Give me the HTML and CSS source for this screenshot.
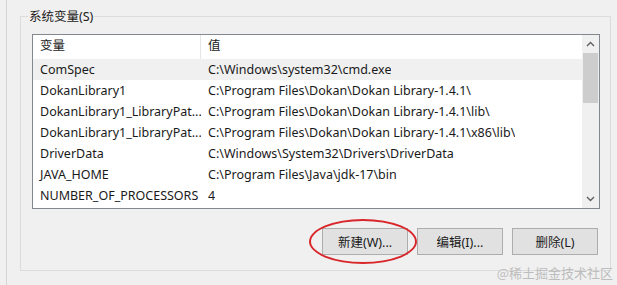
FILE: index.html
```html
<!DOCTYPE html>
<html>
<head>
<meta charset="utf-8">
<link rel="stylesheet" href="styles.css">
</head>
<body>

<div class="frame">
  <div class="group">
    <div class="group-title">系统变量(S)</div>

    <div class="list">
      <div class="list-body">
        <div class="row head">
          <div class="cell name">变量</div>
          <div class="cell value">值</div>
        </div>
        <div class="row hover">
          <div class="cell name">ComSpec</div>
          <div class="cell value">C:\Windows\system32\cmd.exe</div>
        </div>
        <div class="row">
          <div class="cell name">DokanLibrary1</div>
          <div class="cell value">C:\Program Files\Dokan\Dokan Library-1.4.1\</div>
        </div>
        <div class="row">
          <div class="cell name">DokanLibrary1_LibraryPat...</div>
          <div class="cell value">C:\Program Files\Dokan\Dokan Library-1.4.1\lib\</div>
        </div>
        <div class="row">
          <div class="cell name">DokanLibrary1_LibraryPat...</div>
          <div class="cell value">C:\Program Files\Dokan\Dokan Library-1.4.1\x86\lib\</div>
        </div>
        <div class="row">
          <div class="cell name">DriverData</div>
          <div class="cell value">C:\Windows\System32\Drivers\DriverData</div>
        </div>
        <div class="row">
          <div class="cell name">JAVA_HOME</div>
          <div class="cell value">C:\Program Files\Java\jdk-17\bin</div>
        </div>
        <div class="row">
          <div class="cell name">NUMBER_OF_PROCESSORS</div>
          <div class="cell value">4</div>
        </div>
      </div>
      <div class="scrollbar">
        <div class="arrow">
          <svg width="9" height="6" viewBox="0 0 9 6"><path d="M1 5 L4.5 1.5 L8 5" fill="none" stroke="#606060" stroke-width="1.4"/></svg>
        </div>
        <div class="thumb"></div>
        <div class="track"></div>
        <div class="arrow">
          <svg width="9" height="6" viewBox="0 0 9 6"><path d="M1 1 L4.5 4.5 L8 1" fill="none" stroke="#606060" stroke-width="1.4"/></svg>
        </div>
      </div>
    </div>

    <div class="buttons">
      <div class="btn-wrap">
        <button class="btn">新建(W)...</button>
        <div class="circle"></div>
      </div>
      <button class="btn">编辑(I)...</button>
      <button class="btn">删除(L)</button>
    </div>
  </div>
</div>

<div class="watermark">@稀土掘金技术社区</div>

</body>
</html>
```

FILE: styles.css
```css
body {
    margin: 0;
    width: 617px;
    height: 285px;
    overflow: hidden;
    background-color: #f0f0f0;
    font-family: "Noto Sans", "Noto Sans CJK SC", sans-serif;
    font-size: 12.5px;
    color: #1a1a1a;
    position: relative;
}

.frame {
    margin-left: 6px;
    height: 285px;
    border-left: 1px solid #d4d4d4;
    padding-left: 13px;
    padding-top: 16px;
    box-sizing: border-box;
}

.group {
    width: 591px;
    height: 255px;
    border: 1px solid #dcdcdc;
    box-sizing: border-box;
    padding: 0 10px 0 11px;
}

.group-title {
    width: max-content;
    height: 18px;
    margin-top: -9px;
    margin-left: -4px;
    padding: 0 1px;
    line-height: 18px;
    background-color: #f0f0f0;
}

.list {
    display: flex;
    margin-top: 8px;
    width: 568px;
    height: 175px;
    border: 1px solid #828790;
    box-sizing: border-box;
    background-color: #fff;
}

.list-body {
    flex: 1;
}

.row {
    display: flex;
    height: 21px;
    line-height: 21px;
}

.row.head {
    height: 24px;
    line-height: 22px;
}

.row.hover {
    background-color: #f0f0f0;
}

.cell {
    white-space: nowrap;
    overflow: hidden;
}

.name {
    width: 168px;
    padding-left: 7px;
    box-sizing: border-box;
}

.value {
    padding-left: 7px;
}

.head .name {
    border-right: 1px solid #e5e5e5;
}

.scrollbar {
    width: 17px;
    display: flex;
    flex-direction: column;
    background-color: #f0f0f0;
}

.arrow {
    height: 18px;
    display: flex;
    align-items: center;
    justify-content: center;
}

.thumb {
    height: 50px;
    margin: 0 1px;
    background-color: #cdcdcd;
}

.track {
    flex: 1;
}

.buttons {
    display: flex;
    justify-content: flex-end;
    gap: 9px;
    margin-top: 19px;
    width: 568px;
    padding-right: 2px;
    box-sizing: border-box;
}

.btn-wrap {
    position: relative;
}

.btn {
    width: 86px;
    height: 27px;
    margin: 0;
    padding: 0;
    border: 1px solid #adadad;
    background-color: #e1e1e1;
    font-family: "Noto Sans", "Noto Sans CJK SC", sans-serif;
    font-size: 12.5px;
    color: #1a1a1a;
    display: block;
}

.circle {
    position: absolute;
    left: -13px;
    top: -9px;
    width: 108px;
    height: 45px;
    border: 2px solid #d9262a;
    border-radius: 50%;
    box-sizing: border-box;
}

.watermark {
    position: absolute;
    right: 4px;
    bottom: 3px;
    font-family: "Noto Sans CJK SC", sans-serif;
    font-size: 13px;
    color: #bdbdbd;
}
```
